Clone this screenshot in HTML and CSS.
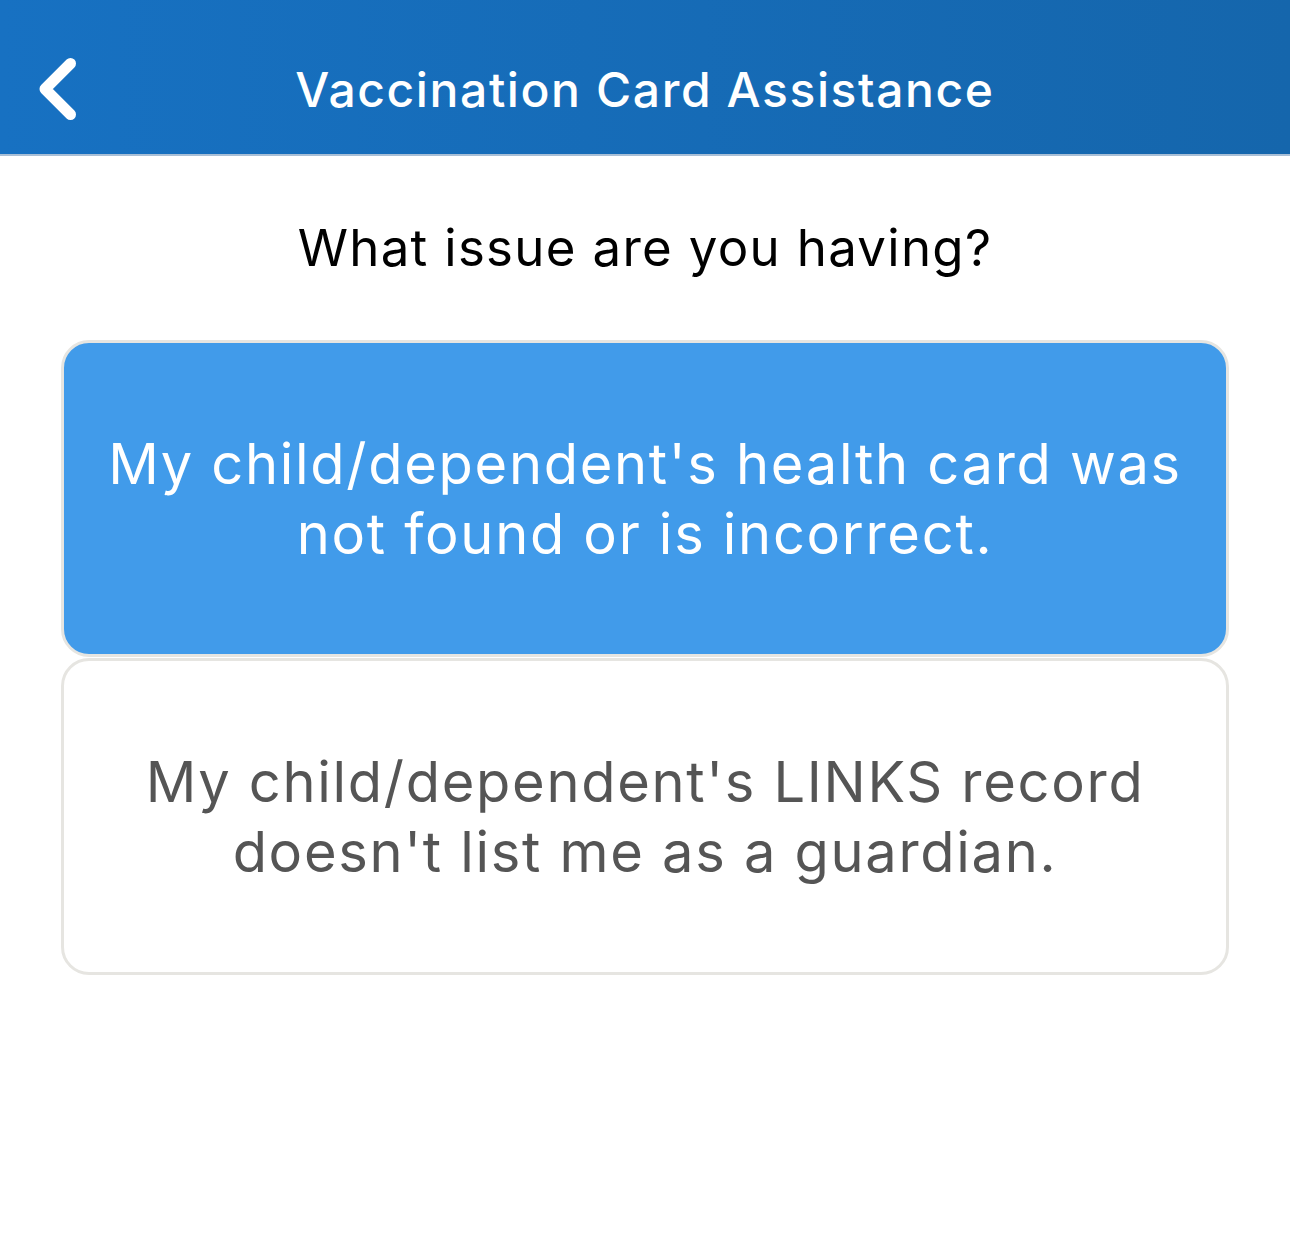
FILE: index.html
```html
<!DOCTYPE html>
<html lang="en">
  <head>
    <meta charset="UTF-8" />
    <meta name="viewport" content="width=device-width, initial-scale=1.0" />
    <title>Vaccination Card Assistance</title>
    <link rel="stylesheet" href="styles.css">
  </head>
  <body>
    <header class="top-bar">
      <a href="#" class="back-button" aria-label="Back">
        <svg width="44" height="64" viewBox="0 0 44 64">
          <path d="M34.5 6.5 L9 32 L34.5 57.5" fill="none" stroke="#fff" stroke-width="11" stroke-linecap="round" stroke-linejoin="round" />
        </svg>
      </a>
      <h1 class="top-bar__title">Vaccination Card Assistance</h1>
    </header>

    <main class="content">
      <p class="question">What issue are you having?</p>
      <div class="options">
        <a href="#" class="option option--selected">
          My child/dependent's health card was not found or is incorrect.
        </a>
        <a href="#" class="option">
          My child/dependent's LINKS record doesn't list me as a guardian.
        </a>
      </div>
    </main>
  </body>
</html>
```

FILE: styles.css
```css
body {
  margin: 0;
  font-family: "Inter", "Noto Sans", Arial, sans-serif;
  background: #fff;
  color: #000;
}

.top-bar {
  position: relative;
  display: flex;
  align-items: center;
  justify-content: center;
  height: 156px;
  background: linear-gradient(to right, #1771c2, #1566ac);
  border-bottom: 2px solid #a9bfd6;
  box-sizing: border-box;
}

.back-button {
  position: absolute;
  left: 36px;
  top: 57px;
  display: block;
  line-height: 0;
}

.top-bar__title {
  margin: 0;
  padding-top: 24px;
  color: #fff;
  font-size: 48px;
  font-weight: 500;
  letter-spacing: 1.6px;
}

.content {
  padding: 0 61px;
}

.question {
  margin: 59px 0 59px;
  text-align: center;
  font-size: 51px;
  line-height: 66px;
  letter-spacing: 1.3px;
}

.options {
  display: flex;
  flex-direction: column;
  gap: 1px;
}

.option {
  display: flex;
  align-items: center;
  justify-content: center;
  height: 317px;
  box-sizing: border-box;
  padding: 0 30px;
  border: 3px solid #e6e5e1;
  border-radius: 28px;
  background: #fff;
  color: #555;
  font-size: 56px;
  line-height: 70px;
  text-align: center;
  text-decoration: none;
  letter-spacing: 1.7px;
}

.option--selected {
  background: #419bea;
  color: #fff;
}
```
